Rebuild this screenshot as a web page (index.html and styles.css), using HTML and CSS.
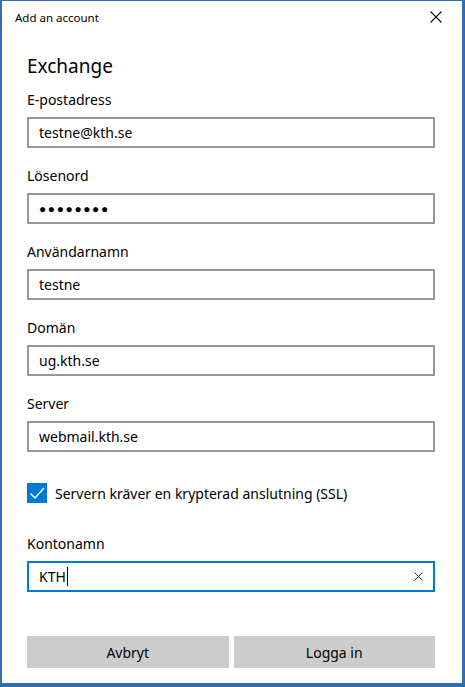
FILE: index.html
```html
<!DOCTYPE html>
<html>
<head>
<meta charset="utf-8">
<link rel="stylesheet" href="styles.css">
</head>
<body>
<div class="frame">
  <div class="window">
    <div class="titlebar">
      <span class="title">Add an account</span>
      <svg class="close" width="12" height="12" viewBox="0 0 12 12"><path d="M0.5 0.5 L11.5 11.5 M11.5 0.5 L0.5 11.5" stroke="#111" stroke-width="1.1" fill="none"/></svg>
    </div>
    <div class="content">
      <h1 class="heading">Exchange</h1>
      <div class="field">
        <div class="label">E-postadress</div>
        <div class="input">testne@kth.se</div>
      </div>
      <div class="field">
        <div class="label">Lösenord</div>
        <div class="input password">●●●●●●●●</div>
      </div>
      <div class="field">
        <div class="label">Användarnamn</div>
        <div class="input">testne</div>
      </div>
      <div class="field">
        <div class="label">Domän</div>
        <div class="input">ug.kth.se</div>
      </div>
      <div class="field">
        <div class="label">Server</div>
        <div class="input">webmail.kth.se</div>
      </div>
      <div class="check-row">
        <span class="checkbox"><svg width="20" height="20" viewBox="0 0 20 20"><path d="M3.5 10.5 L8 15 L17 5" stroke="#fff" stroke-width="1.5" fill="none"/></svg></span>
        <span class="check-label">Servern kräver en krypterad anslutning (SSL)</span>
      </div>
      <div class="field account">
        <div class="label">Kontonamn</div>
        <div class="input focused"><span class="value">KTH</span><span class="caret"></span><svg class="clear" width="9" height="9" viewBox="0 0 9 9"><path d="M0.5 0.5 L8.5 8.5 M8.5 0.5 L0.5 8.5" stroke="#333" stroke-width="1" fill="none"/></svg></div>
      </div>
      <div class="buttons">
        <div class="btn">Avbryt</div>
        <div class="btn">Logga in</div>
      </div>
    </div>
  </div>
</div>
</body>
</html>
```
FILE: styles.css
```css
html, body {
  margin: 0;
  padding: 0;
}
body {
  width: 465px;
  height: 687px;
  overflow: hidden;
  font-family: "Noto Sans", "Open Sans", sans-serif;
  color: #000;
}
.frame {
  box-sizing: border-box;
  width: 465px;
  height: 687px;
  background: #2d6db0;
  padding: 1px 3px 4px 2px;
}
.window {
  background: #fff;
  height: 100%;
  display: flex;
  flex-direction: column;
}
.titlebar {
  height: 32px;
  display: flex;
  align-items: center;
  justify-content: space-between;
  padding: 0 20px 0 13px;
  flex: none;
}
.title {
  font-size: 11.5px;
  color: #000;
}
.close {
  display: block;
}
.content {
  padding: 0 27px 0 25px;
  display: flex;
  flex-direction: column;
}
.heading {
  margin: 19px 0 0 0;
  font-weight: normal;
  font-size: 19px;
  line-height: 28px;
  height: 38px;
}
.field {
  display: flex;
  flex-direction: column;
}
.field + .field {
  margin-top: 18px;
}
.label {
  font-size: 14px;
  line-height: 20px;
  height: 20px;
  margin-bottom: 7px;
}
.input {
  box-sizing: border-box;
  height: 31px;
  border: 2px solid #999;
  padding: 0 10px;
  font-size: 14px;
  line-height: 27px;
  display: flex;
  align-items: center;
}
.password {
  font-size: 12px;
  letter-spacing: 1.6px;
}
.check-row {
  margin-top: 31px;
  display: flex;
  align-items: center;
  height: 20px;
}
.checkbox {
  width: 20px;
  height: 20px;
  background: #0078d7;
  display: block;
  flex: none;
}
.checkbox svg {
  display: block;
}
.check-label {
  margin-left: 8px;
  font-size: 14px;
}
.field.account {
  margin-top: 31px;
}
.focused {
  border-color: #0078d7;
}
.caret {
  width: 1px;
  height: 19px;
  background: #000;
  margin-left: 1px;
}
.clear {
  margin-left: auto;
  margin-right: 0;
}
.buttons {
  margin-top: 44px;
  display: grid;
  grid-template-columns: 1fr 1fr;
  column-gap: 5px;
}
.btn {
  height: 32px;
  background: #ccc;
  display: flex;
  align-items: center;
  justify-content: center;
  font-size: 14px;
}
```
